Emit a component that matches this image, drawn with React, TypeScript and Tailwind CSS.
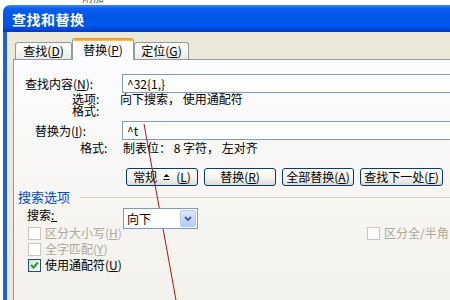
import React from "react";

const U = ({ c }: { c: string }) => <span className="underline underline-offset-[1px]">{c}</span>;

function Tab({ label, k, selected, w }: { label: string; k: string; selected?: boolean; w: string }) {
  if (selected) {
    return (
      <div className={`relative z-10 -mb-px h-[22px] ${w} flex flex-col border-x border-[#919b9c] bg-[#fcfcfe] rounded-t-[3px] overflow-hidden`}>
        <div className="h-[3px] bg-gradient-to-b from-[#e68b2c] to-[#ffc73c] shrink-0" />
        <div className="flex-1 flex items-center justify-center pb-[1px]">
          {label}(<U c={k} />)
        </div>
      </div>
    );
  }
  return (
    <div className={`h-[17px] ${w} flex items-center justify-center border border-b-0 border-[#919b9c] rounded-t-[3px] bg-gradient-to-b from-[#ffffff] to-[#ecebe5]`}>
      {label}(<U c={k} />)
    </div>
  );
}

function Btn({ children, w }: { children: React.ReactNode; w: string }) {
  return (
    <div className={`${w} h-[18px] rounded-[3px] border border-[#003c74] bg-gradient-to-b from-[#ffffff] via-[#f5f5f2] to-[#dedcd2] flex items-center justify-center`}>
      {children}
    </div>
  );
}

function Check({ checked, disabled }: { checked?: boolean; disabled?: boolean }) {
  return (
    <div
      className={`w-[13px] h-[13px] border ${disabled ? "border-[#cac8bb] bg-white" : "border-[#1c5180] bg-gradient-to-br from-[#dcdcd7] to-white"} flex items-center justify-center shrink-0`}
    >
      {checked && (
        <svg width="9" height="9" viewBox="0 0 9 9">
          <path d="M1 4 L3.5 6.5 L8 1.5" stroke="#21a121" strokeWidth="2" fill="none" />
        </svg>
      )}
    </div>
  );
}

export default function App() {
  return (
    <div className="w-[450px] h-[300px] overflow-hidden bg-white relative font-['Noto_Sans_CJK_SC','Noto_Sans',sans-serif] text-[12px] leading-[12px] text-black">
      <div className="h-[5px] overflow-hidden">
        <div className="ml-[82px] -mt-[9px] text-[11px] leading-[12px] text-[#666]">附加</div>
      </div>
      <div className="ml-[3px] h-[295px] flex flex-col rounded-tl-[7px] overflow-hidden">
        <div className="h-[27px] shrink-0 flex items-center pl-[9px] bg-[linear-gradient(to_bottom,#3d8ffc_0%,#0a5ff0_12%,#0055e6_45%,#0058ee_75%,#0046d6_90%,#003aba_100%)]">
          <span className="text-white font-bold text-[14px] leading-[14px] tracking-[0.5px]">查找和替换</span>
        </div>
        <div className="flex-1 flex flex-col bg-[#ece9d8] border-l-[4px] border-l-[#1c5fe3] pl-[6px] pt-[6px]">
          <div className="flex items-end h-[21px] pl-[2px]">
            <Tab label="查找" k="D" w="w-[57px]" />
            <Tab label="替换" k="P" w="w-[62px]" selected />
            <Tab label="定位" k="G" w="w-[55px]" />
          </div>
          <div className="flex-1 border-t border-l border-[#919b9c] bg-gradient-to-b from-[#fcfcfe] to-[#f2f1eb] flex flex-col">
            {/* row 1 */}
            <div className="mt-[14px] flex items-center h-[19px]">
              <div className="w-[108px] pl-[11px]">
                查找内容(<U c="N" />):
              </div>
              <div className="flex-1 h-[19px] border border-r-0 border-[#7f9db9] bg-white flex items-center pl-[4px]">^32{"{1,}"}</div>
            </div>
            <div className="flex items-center h-[12px]">
              <div className="w-[106px] pl-[58px]">选项:</div>
              <div>向下搜索， 使用通配符</div>
            </div>
            <div className="flex items-center h-[12px]">
              <div className="w-[106px] pl-[58px]">格式:</div>
            </div>
            {/* row 2 */}
            <div className="mt-[4px] flex items-center h-[19px]">
              <div className="w-[108px] pl-[21px]">
                替换为(<U c="I" />):
              </div>
              <div className="flex-1 h-[19px] border border-r-0 border-[#7f9db9] bg-white flex items-center pl-[4px]">^t</div>
            </div>
            <div className="flex items-center h-[12px] mt-[2px]">
              <div className="w-[108px] pl-[66px]">格式:</div>
              <div className="pl-[1px]">制表位： 8 字符， 左对齐</div>
            </div>
            {/* buttons */}
            <div className="mt-[14px] flex gap-[6px] pl-[112px]">
              <Btn w="w-[72px]">
                <span>常规</span>
                <svg width="7" height="8" viewBox="0 0 7 8" className="mx-[6px]">
                  <path d="M0.5 4 L3.5 1 L6.5 4 Z" fill="#000" />
                  <rect x="0.5" y="6" width="6" height="1" fill="#000" />
                </svg>
                <span>(<U c="L" />)</span>
              </Btn>
              <Btn w="w-[72px]">
                替换(<U c="R" />)
              </Btn>
              <Btn w="w-[72px]">
                全部替换(<U c="A" />)
              </Btn>
              <Btn w="w-[83px]">
                查找下一处(<U c="F" />)
              </Btn>
            </div>
            {/* search options */}
            <div className="mt-[5px] flex items-center h-[12px] pl-[4px]">
              <span className="text-[#0046d5] text-[13px]">搜索选项</span>
              <div className="flex-1 ml-[10px] h-px bg-[#d0d0bf]" />
            </div>
            <div className="mt-[5px] flex items-start h-[17px]">
              <div className="w-[109px] pl-[13px] pt-[1px]">
                搜索<span className="underline">:&nbsp;</span>
              </div>
              <div className="w-[75px] h-[21px] border border-[#7f9db9] bg-white flex items-center relative z-10">
                <span className="pl-[3px] flex-1">向下</span>
                <div className="w-[16px] h-[17px] mr-[1px] rounded-[2px] border border-[#b7cbf5] bg-gradient-to-b from-[#dbe7fe] to-[#b4cbf7] flex items-center justify-center">
                  <svg width="8" height="6" viewBox="0 0 8 6">
                    <path d="M1 1 L4 4 L7 1" stroke="#4d6185" strokeWidth="2" fill="none" />
                  </svg>
                </div>
              </div>
            </div>
            <div className="flex flex-col pl-[14px]">
              <div className="flex items-center h-[16px] text-[#aca899]">
                <div className="w-[339px] flex items-center gap-[4px]">
                  <Check disabled />
                  <span>区分大小写(<U c="H" />)</span>
                </div>
                <div className="flex items-center gap-[4px]">
                  <Check disabled />
                  <span>区分全/半角</span>
                </div>
              </div>
              <div className="flex items-center h-[16px] gap-[4px] text-[#aca899]">
                <Check disabled />
                <span>全字匹配(<U c="Y" />)</span>
              </div>
              <div className="flex items-center h-[16px] gap-[4px]">
                <Check checked />
                <span>使用通配符(<U c="U" />)</span>
              </div>
            </div>
          </div>
        </div>
      </div>
      <svg className="absolute left-0 top-0 pointer-events-none" width="450" height="300" viewBox="0 0 450 300">
        <line x1="144" y1="124" x2="176" y2="300" stroke="#a8141c" strokeWidth="1" />
      </svg>
    </div>
  );
}
